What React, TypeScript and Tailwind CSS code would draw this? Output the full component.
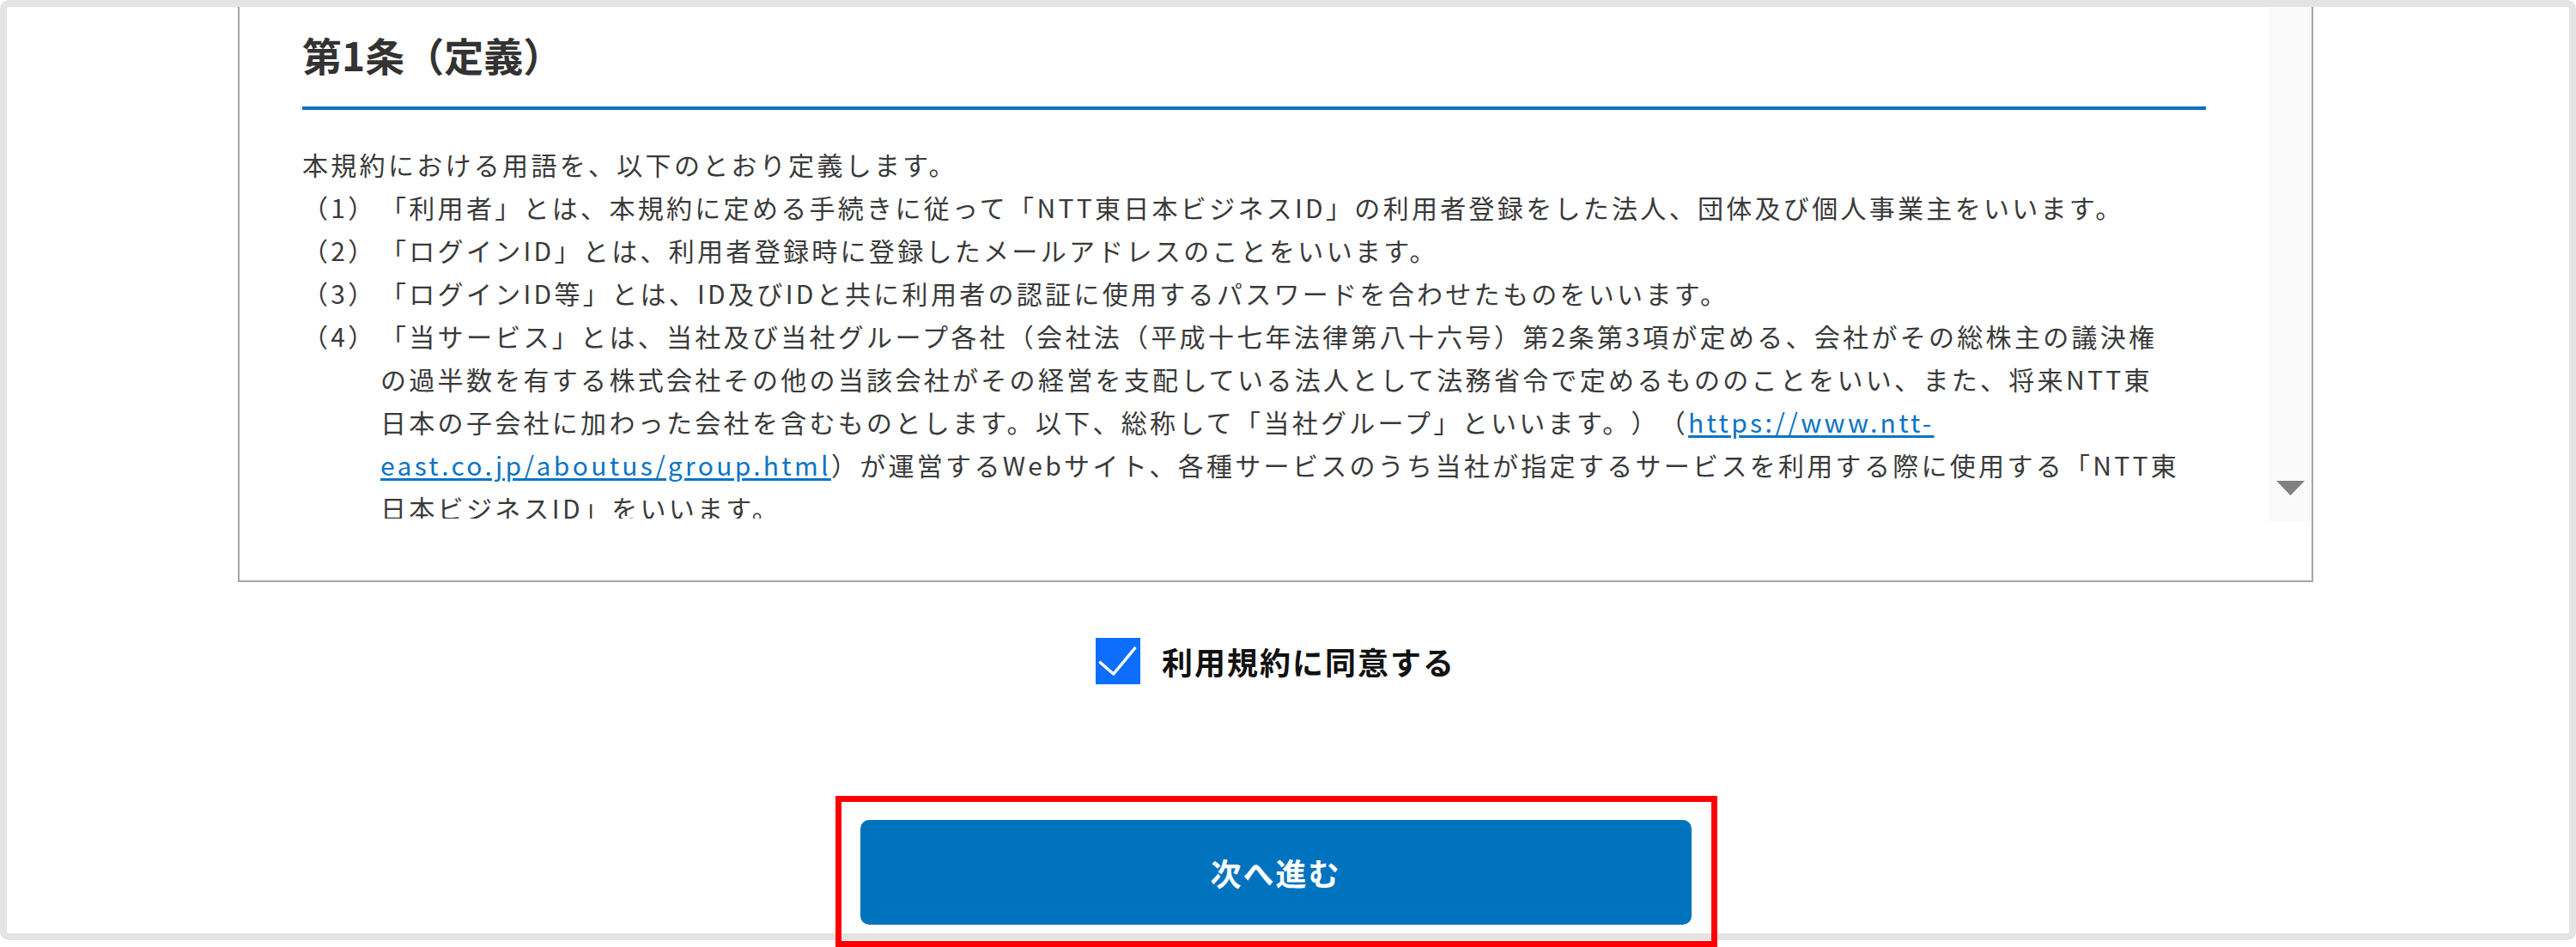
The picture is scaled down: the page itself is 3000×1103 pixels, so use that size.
import React from "react";

function Line({ children }: { children: React.ReactNode }) {
  return <div className="whitespace-nowrap">{children}</div>;
}

function Item({ label, children }: { label: string; children: React.ReactNode }) {
  return (
    <div className="flex">
      <div className="w-[91px] shrink-0 whitespace-nowrap">{label}</div>
      <div className="flex-1">{children}</div>
    </div>
  );
}

export default function App() {
  return (
    <div className="relative w-[3000px] h-[1103px] bg-white font-['Noto_Sans_CJK_JP','Noto_Sans',sans-serif] [text-spacing-trim:space-all]">
      <div className="h-[1095px] border-8 border-[#e4e4e4] rounded-[10px] overflow-hidden flex flex-col">
        {/* Terms box */}
        <div className="ml-[269px] w-[2417px] h-[670px] shrink-0 border-x-2 border-b-2 border-[#a5a5a5] flex flex-col">
          <div className="h-[599px] flex items-start">
            <div className="flex-1 h-[596px] px-[73px] pt-[21px] overflow-hidden">
              <h2 className="text-[46px] font-bold leading-[69px] text-[#333] pb-[26px] border-b-4 border-[#0a70c0]">
                第1条（定義）
              </h2>
              <div className="mt-[38px] text-[30px] leading-[50px] tracking-[3.3px] text-[#3a3a3a]">
                <Line>本規約における用語を、以下のとおり定義します。</Line>
                <Item label="（1）">
                  <Line>
                    「利用者」とは、本規約に定める手続きに従って「NTT東日本ビジネスID」の利用者登録をした法人、団体及び個人事業主をいいます。
                  </Line>
                </Item>
                <Item label="（2）">
                  <Line>「ログインID」とは、利用者登録時に登録したメールアドレスのことをいいます。</Line>
                </Item>
                <Item label="（3）">
                  <Line>
                    「ログインID等」とは、ID及びIDと共に利用者の認証に使用するパスワードを合わせたものをいいます。
                  </Line>
                </Item>
                <Item label="（4）">
                  <Line>
                    「当サービス」とは、当社及び当社グループ各社（会社法（平成十七年法律第八十六号）第2条第3項が定める、会社がその総株主の議決権
                  </Line>
                  <Line>
                    の過半数を有する株式会社その他の当該会社がその経営を支配している法人として法務省令で定めるもののことをいい、また、将来NTT東
                  </Line>
                  <Line>
                    日本の子会社に加わった会社を含むものとします。以下、総称して「当社グループ」といいます。）（
                    <a className="text-[#0b74c4] underline underline-offset-[3px]" href="#">
                      https://www.ntt-
                    </a>
                  </Line>
                  <Line>
                    <a className="text-[#0b74c4] underline underline-offset-[3px]" href="#">
                      east.co.jp/aboutus/group.html
                    </a>
                    ）が運営するWebサイト、各種サービスのうち当社が指定するサービスを利用する際に使用する「NTT東
                  </Line>
                  <Line>日本ビジネスID」をいいます。</Line>
                </Item>
              </div>
            </div>
            <div className="w-[50px] h-[599px] shrink-0 bg-[#fafafa] flex flex-col justify-end items-center pb-[30px]">
              <svg width="33" height="17" viewBox="0 0 33 17">
                <polygon points="0,0 33,0 16.5,17" fill="#808080" />
              </svg>
            </div>
          </div>
        </div>

        {/* Agree checkbox */}
        <div className="ml-[269px] w-[2417px] mt-[65px] flex justify-center items-center gap-[25px]">
          <div className="w-[52px] h-[54px] bg-[#0d6efd] shrink-0">
            <svg width="52" height="54" viewBox="0 0 52 54">
              <polyline
                points="5.5,28.7 20.8,42 45.6,12"
                fill="none"
                stroke="#ffffff"
                strokeWidth="3.5"
                strokeLinecap="round"
                strokeLinejoin="round"
              />
            </svg>
          </div>
          <span className="text-[36px] font-bold tracking-[2px] text-[#111] leading-[54px]">
            利用規約に同意する
          </span>
        </div>

        {/* Next button */}
        <div className="ml-[269px] w-[2417px] mt-[158px] flex justify-center">
          <button className="w-[968px] h-[122px] rounded-[10px] bg-[#0073bf] text-white text-[36px] font-bold tracking-[2px]">
            次へ進む
          </button>
        </div>
      </div>

      {/* Red annotation frame */}
      <div className="absolute left-[973px] top-[927px] w-[1027px] h-[176px] border-[7px] border-[#ff0000] pointer-events-none" />
    </div>
  );
}
